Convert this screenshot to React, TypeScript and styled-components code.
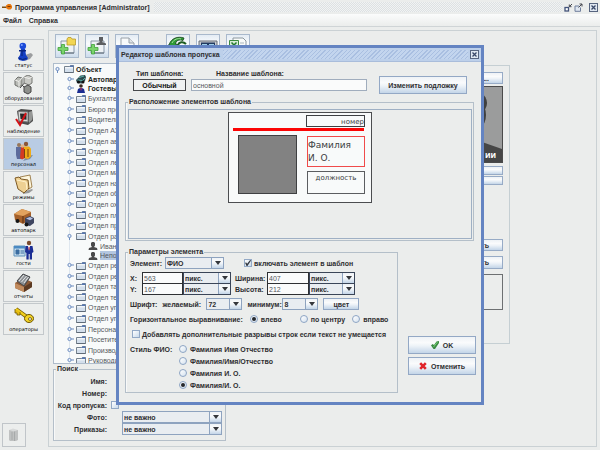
import React from 'react';
import styled, { createGlobalStyle, css } from 'styled-components';

const GlobalStyle = createGlobalStyle`
  *, *::before, *::after { box-sizing: border-box; }
  html, body, #root { height: 100%; }
  body {
    margin: 0;
    background: #ebedec;
    color: #2e2e30;
    font: bold 7px/9px "Liberation Sans", Arial, sans-serif;
    overflow: hidden;
  }
  button, input, select { font: inherit; color: inherit; margin: 0; padding: 0; border-radius: 0; }
  fieldset { margin: 0; min-width: 0; }
`;

const metal = 'linear-gradient(#eef2f6 0%, #fafbfc 35%, #eef3f8 55%, #c3d5e8 100%)';

const Page = styled.div`
  min-height: 100vh;
  display: flex;
  flex-direction: column;
`;

const TitleBar = styled.header`
  height: 14px;
  display: flex;
  align-items: center;
  gap: 3px;
  padding: 0 2px;
`;

const Hatch = styled.div<{ $blue?: boolean }>`
  flex: 1;
  align-self: stretch;
  margin: ${p => (p.$blue ? '2px 4px 2px 3px' : '2px 1px')};
  background: ${p => (p.$blue
    ? 'repeating-linear-gradient(135deg, #a9bfe1 0 1px, #c3d5ee 1px 3px)'
    : 'conic-gradient(#dde1e3 25%, #f1f3f3 0 50%, #dde1e3 0 75%, #f1f3f3 0) 0 0 / 2px 2px')};
`;

const WindowButton = styled.button<{ $gap?: boolean }>`
  width: 9px;
  height: 9px;
  border: 0;
  margin-left: ${p => (p.$gap ? '3px' : '-2px')};
  background: none;
  display: grid;
  place-items: center;
`;

const MenuBar = styled.nav`
  height: 13px;
  display: flex;
  align-items: center;
  gap: 7px;
  padding: 0 3px;
  background: linear-gradient(#fbfcfc, #ebedec);
  border-bottom: 1px solid #cfd4d6;
`;

const MenuItem = styled.button`
  border: 0;
  background: none;
  font-weight: bold;
`;

const Workspace = styled.div`
  flex: 1;
  display: flex;
  gap: 4px;
  padding: 3px 3px 3px 2px;
`;

const Sidebar = styled.nav`
  width: 42px;
  display: flex;
  flex-direction: column;
  gap: 1px;
  padding: 9px 0 0 1px;
`;

const SideButton = styled.button<{ $active?: boolean }>`
  height: 32px;
  display: flex;
  flex-direction: column;
  align-items: center;
  padding: 2px 0 0;
  border: 1px solid #c3c8cb;
  background: ${p => (p.$active ? '#b9cce4' : '#eceeed')};
  font: normal 5px/6px "DejaVu Sans", Verdana, sans-serif;
  color: #000;
  white-space: nowrap;
`;

const TrashButton = styled.button`
  width: 24px;
  height: 24px;
  margin: auto 0 0 -1px;
  display: grid;
  place-items: center;
  border: 1px solid #c0c5c9;
  background: #eceeed;
`;

const Main = styled.main`
  flex: 1;
  display: flex;
  padding: 3px 4px 4px;
  border: 1px solid #cad1d4;
`;

const LeftColumn = styled.section`
  width: 173px;
  display: flex;
  flex-direction: column;
`;

const Toolbar = styled.div`
  display: flex;
  gap: 6px;
  padding-left: 2px;
`;

const ToolButton = styled.button<{ $gap?: boolean }>`
  flex: none;
  width: 24px;
  height: 24px;
  margin-left: ${p => (p.$gap ? '21px' : '0')};
  border: 1px solid #a9b9cc;
  background: linear-gradient(#e4ecf4, #fafcfd 40%, #cddcec);
  display: grid;
  place-items: center;
`;

const TreeBox = styled.div`
  height: 301px;
  margin-top: 5px;
  overflow: hidden;
  border: 1px solid #aebccb;
  background: #f8fafa;
`;

const Tree = styled.ul`
  height: 302px;
  margin: 0;
  padding: 0;
  list-style: none;
  display: flex;
  flex-direction: column;
  background: linear-gradient(#dfe7ef, #dfe7ef) 15px 14px / 1px 100% no-repeat;
`;

const TreeItem = styled.li<{ $level: number; $bold?: boolean; $tight?: boolean }>`
  flex: ${p => (p.$tight ? 9 : 10)} 1 0;
  min-height: 0;
  display: flex;
  align-items: center;
  gap: 2px;
  padding-left: ${p => [1, 13, 34][p.$level]}px;
  font-weight: ${p => (p.$bold ? 'bold' : 'normal')};
  color: ${p => (p.$bold ? '#1d1e20' : '#55585c')};
  white-space: nowrap;
`;

const TreeLabel = styled.span<{ $selected?: boolean }>`
  padding: 0 1px 0 0;
  background: ${p => (p.$selected ? '#b3c6e0' : 'none')};
`;

const Group = styled.fieldset`
  border: 1px solid #b4bfc9;
  box-shadow: inset 1px 0 #f8f9f9;
  padding: 0;
`;

const Legend = styled.legend`
  margin-left: 2px;
  padding: 0 1px;
  height: 8px;
  line-height: 8px;
`;

const SearchGroup = styled(Group)`
  margin-top: 1px;
  padding: 2px 0 5px;
`;

const SearchRow = styled.div`
  height: 12px;
  margin: 0 3px;
  display: grid;
  grid-template-columns: 50px 1fr;
  align-items: center;
  gap: 4px;
  & > label { text-align: right; white-space: nowrap; }
`;

const SearchSelectSlot = styled.div`
  padding-left: 11px;
  display: grid;
`;

const TextField = styled.input`
  height: 12px;
  min-width: 0;
  width: 100%;
  border: 1px solid #a0adbd;
  background: #fafbfb;
  padding: 0 1px;
  font-weight: normal;
  color: #55585c;
`;

const SelectFrame = styled.span<{ $w?: number; $dark?: boolean }>`
  width: ${p => (p.$w ? `${p.$w}px` : 'auto')};
  height: 12px;
  display: flex;
  border: 1px solid ${p => (p.$dark ? '#3a4558' : '#8ea3bf')};
  background: #e9edf1;
  & > select {
    flex: 1;
    min-width: 0;
    border: 0;
    padding: 0 1px;
    background: none;
    appearance: none;
    outline: 0;
  }
`;

const SelectArrow = styled.span`
  width: 12px;
  display: grid;
  place-items: center;
  border-left: 1px solid #8ea3bf;
  background: ${metal};
`;

const Box = styled.input`
  appearance: none;
  width: 8px;
  height: 8px;
  flex: none;
  border: 1px solid #93a9c6;
  background: linear-gradient(135deg, #ffffff, #c9daeb);
  display: grid;
  place-items: center;
  &:checked::before {
    content: '';
    width: 6px;
    height: 6px;
    background: #33383f;
    clip-path: polygon(0 45%, 20% 40%, 35% 62%, 85% 0, 100% 8%, 40% 100%, 25% 100%);
  }
`;

const Radio = styled.input`
  appearance: none;
  width: 8px;
  height: 8px;
  flex: none;
  border: 1px solid #8da5c4;
  border-radius: 50%;
  background: linear-gradient(135deg, #ffffff, #d5e2ef);
  display: grid;
  place-items: center;
  &:checked::before {
    content: '';
    width: 4px;
    height: 4px;
    border-radius: 50%;
    background: #25282c;
  }
`;

const Card = styled.section`
  flex: 0 1 284px;
  align-self: flex-start;
  height: 279px;
  margin-top: 31px;
  padding: 6px 6px 0;
  border: 1px solid #c5cfd3;
  display: flex;
  flex-direction: column;
  align-items: flex-end;
`;

const CardButton = styled.button<{ $h: number; $top: number }>`
  width: 76px;
  height: ${p => p.$h}px;
  margin-top: ${p => p.$top}px;
  padding-right: 13px;
  text-align: right;
  border: 1px solid #97abc6;
  background: ${metal};
`;

const Photo = styled.div`
  margin-top: 2px;
  height: 77px;
  width: 76px;
  border: 1px solid #4b4b4b;
`;

const NoteArea = styled.div`
  width: 76px;
  height: 36px;
  margin-top: 5px;
  border: 1px solid #6d7072;
`;

const Overlay = styled.div`
  position: absolute;
  inset: 0;
  display: grid;
  place-items: center;
`;

const Dialog = styled.div`
  width: 368px;
  border: 3px solid #6484c2;
  background: #ebedec;
`;

const DialogTitle = styled.header`
  height: 14px;
  display: flex;
  align-items: center;
  padding: 0 2px 0 2px;
  background: #bdd0ea;
  border-bottom: 1px solid #a9bddb;
`;

const DialogBody = styled.div`
  padding: 7px 5px 9px 6px;
`;

const HeaderRow = styled.div`
  display: flex;
  align-items: flex-end;
  padding: 0 9px 0 8px;
`;

const HeaderField = styled.div<{ $grow?: boolean }>`
  flex: ${p => (p.$grow ? '1' : '0 0 53px')};
  margin-right: ${p => (p.$grow ? '12px' : '5px')};
  margin-bottom: 3px;
  display: grid;
  gap: 1px;
  & > label { padding-left: ${p => (p.$grow ? '25px' : '3px')}; }
`;

const TypeButton = styled.button`
  height: 12px;
  border: 1px solid #46484b;
  background: #f0f2f2;
  color: #111;
`;

const MetalButton = styled.button<{ $w: number; $h: number }>`
  flex: none;
  width: ${p => p.$w}px;
  height: ${p => p.$h}px;
  display: flex;
  align-items: center;
  justify-content: center;
  gap: 4px;
  border: 1px solid #93a8c5;
  background: ${metal};
  white-space: nowrap;
`;

const PreviewGroup = styled(Group)`
  margin: 4px 2px 7px 0;
  padding: 3px 0 1px;
`;

const PreviewArea = styled.div`
  height: 130px;
  margin: 0 1px 0 2px;
  padding-top: 2px;
  display: flex;
  justify-content: center;
  border: 1px solid #9fb0c4;
`;

const Badge = styled.div`
  position: relative;
  width: 144px;
  height: 91px;
  border: 1px solid #4b4d50;
  background: #f8fafa;
`;

const badgePart = css`
  position: absolute;
  font-family: "DejaVu Sans", Verdana, sans-serif;
  font-weight: normal;
  color: #3c3e42;
`;

const BadgeNumber = styled.div`
  ${badgePart}
  left: 77px; top: 2px; width: 59px; height: 12px;
  border: 1px solid #3d3f42;
  text-align: right;
  line-height: 12px;
`;

const BadgeLine = styled.div`
  ${badgePart}
  left: 4px; top: 15px; width: 131px; height: 3px;
  background: #fb0505;
`;

const BadgePhoto = styled.div`
  ${badgePart}
  left: 9px; top: 22px; width: 59px; height: 59px;
  border: 1px solid #3f4042;
  background: #828282;
`;

const BadgeName = styled.div`
  ${badgePart}
  left: 78px; top: 23px; width: 58px; height: 31px;
  border: 1px solid #f04a4a;
  font-size: 9px;
  line-height: 13px;
  padding-top: 2px;
`;

const BadgeDuty = styled.div`
  ${badgePart}
  left: 78px; top: 58px; width: 58px; height: 23px;
  border: 1px solid #5b5d60;
  text-align: center;
  line-height: 13px;
`;

const LowerRow = styled.div`
  display: flex;
  align-items: stretch;
  gap: 10px;
`;

const ParamGroup = styled(Group)`
  flex: 1;
  padding: 1px 0;
`;

const ParamStack = styled.div`
  margin: 0 4px;
  display: flex;
  flex-direction: column;
  gap: 3px;
`;

const Row = styled.div<{ $gap?: number }>`
  min-height: 12px;
  display: flex;
  align-items: center;
  gap: ${p => p.$gap ?? 5}px;
  white-space: nowrap;
`;

const Check = styled.label<{ $ml?: number; $gap?: number }>`
  display: flex;
  align-items: center;
  gap: ${p => p.$gap ?? 2}px;
  margin-left: ${p => p.$ml ?? 0}px;
  white-space: nowrap;
`;

const SizeGrid = styled.div`
  display: grid;
  grid-template-columns: 12px 41px 48px 36px 42px 46px;
  grid-template-rows: 12px 11px;
  align-items: end;
`;

const SizeLabel = styled.label<{ $inset?: boolean }>`
  align-self: center;
  padding-left: ${p => (p.$inset ? 4 : 0)}px;
`;

const SizeField = styled(TextField)`
  border: 1px solid #2e3033;
`;

const StyleRow = styled.div`
  display: grid;
  grid-template-columns: 49px 1fr;
  align-items: start;
`;

const RadioStack = styled.div`
  display: grid;
  grid-auto-rows: 12px;
`;

const FontLabel = styled.label<{ $w: number }>`
  width: ${p => p.$w}px;
`;

const Actions = styled.div`
  display: flex;
  flex-direction: column;
  justify-content: flex-end;
  gap: 3px;
  padding-bottom: 18px;
`;

/* ---------- icons ---------- */

const CloseGlyph = () => (
  <svg width="9" height="9" viewBox="0 0 9 9" aria-hidden="true">
    <rect x=".5" y=".5" width="8" height="8" fill="#dfe7f1" stroke="#56647f" />
    <path d="M2.500 2.500l4 4M6.500 2.500l-4 4" stroke="#384768" strokeWidth="1.300" />
  </svg>
);

const MinGlyph = () => (
  <svg width="9" height="9" viewBox="0 0 9 9" aria-hidden="true">
    <rect x="1" y="4.500" width="3.500" height="3.500" fill="#fff" stroke="#44547a" strokeWidth="1.300" />
    <path d="M8 1L5.500 3.500M5.300 1.500v2.200h2.200" stroke="#44474f" fill="none" />
  </svg>
);

const MaxGlyph = () => (
  <svg width="9" height="9" viewBox="0 0 9 9" aria-hidden="true">
    <path d="M5 3H1v5.300h5.500V4.500" fill="#dfe6f0" stroke="#6f7e9c" />
    <path d="M4.500 4.500L8 1M5.500 1h2.500v2.500" stroke="#44474f" fill="none" />
  </svg>
);

const AppIcon = () => (
  <svg width="10" height="8" viewBox="0 0 10 8" aria-hidden="true">
    <path d="M0 3.500h5v1.500H0z" fill="#7b4c10" />
    <path d="M4 2.500L6 1h2.500L10 3v2L8.500 6.500H6L4 5z" fill="#e8780e" />
    <path d="M5.500 3.500h3" stroke="#7d3a05" />
  </svg>
);

const Arrow = () => (
  <svg width="6" height="4" viewBox="0 0 6 4" aria-hidden="true">
    <path d="M0 0h6L3 4z" fill="#34373c" />
  </svg>
);

const Handle = ({ open }: { open?: boolean }) => (
  <svg width="7" height="7" viewBox="0 0 7 7" aria-hidden="true">
    <circle cx="2.500" cy="3" r="1.600" fill="#eef3fa" stroke="#6d8dc0" />
    <path d={open ? 'M2.500 4.500V7' : 'M4 3h3'} stroke="#6d8dc0" />
  </svg>
);

const FolderIcon = () => (
  <svg width="10" height="8" viewBox="0 0 10 8" aria-hidden="true">
    <path d="M.5 1.500h5L6.500 .5h3v7h-9z" fill="#d3dfec" stroke="#76838f" />
    <path d="M6 .5h3.500v1.500H5.500z" fill="#5577b3" />
    <path d="M1 2.800h8" stroke="#fff" />
    <path d="M.5 7.500h9" stroke="#5f6b78" />
  </svg>
);

const CarIcon = () => (
  <svg width="10" height="9" viewBox="0 0 10 9" aria-hidden="true">
    <path d="M0 5l3-3 1.500-1.500L9 0l1 2-1 4-3 2.500L1 8z" fill="#2c4a50" />
    <path d="M3 2.500l5-1.500M1.500 5l5 .5L9 3" stroke="#5bb0a8" fill="none" />
    <circle cx="2.500" cy="7" r="1.500" fill="#111" /><circle cx="7" cy="7" r="1.500" fill="#111" />
  </svg>
);

const GuestIcon = () => (
  <svg width="10" height="9" viewBox="0 0 10 9" aria-hidden="true">
    <circle cx="5" cy="2" r="1.800" fill="#3b2a22" />
    <path d="M1 9l1-4 2-1h2l2 1 1 4z" fill="#1a2d92" />
    <path d="M4.300 4.200h1.500L5 7z" fill="#e34" />
  </svg>
);

const PersonIcon = () => (
  <svg width="10" height="8" viewBox="0 0 10 8" aria-hidden="true">
    <path d="M3 1l1-1h2l1 1v2.500L6 5l3 1 .5 2h-9L1 6l3-1-1-1.500z" fill="#4a4a4a" />
  </svg>
);

const SideSvg = ({ children }: { children: React.ReactNode }) => (
  <svg width="22" height="20" viewBox="0 0 22 20" aria-hidden="true">{children}</svg>
);

const StatusIcon = () => (
  <SideSvg>
    <path d="M12 13l6-2 2 2-3 4-6 2z" fill="#9b9d9f" />
    <path d="M8 7h4l1 6 2 3-1 2-4 1-4-1-1-2 2-3z" fill="#1540c4" />
    <circle cx="9.800" cy="4" r="3.300" fill="#1a4ad8" />
    <path d="M6 8h7v1.500H6z" fill="#0a2580" />
    <path d="M9 9v5M5.500 16l4 1.500 4-1" stroke="#0a2372" fill="none" />
    <circle cx="8.800" cy="3" r="1" fill="#7fa2ff" />
  </SideSvg>
);

const EquipmentIcon = () => (
  <SideSvg>
    <path d="M7 13L14 5M6 7l9 9" stroke="#444" />
    <path d="M2 5l3-3 4 1v7l-3 2-4-2z" fill="#b9bbb6" stroke="#6d6f6b" />
    <path d="M11 2l4-2 4 2v6l-3 2-5-2z" fill="#c9cac6" stroke="#757672" />
    <path d="M11 12l4-2 3 2v5l-3 2-4-2z" fill="#8e908c" stroke="#444" />
    <path d="M2 5l4 1.500L9 3M6 6.500V12M11 2l5 1.500L19 2" stroke="#efefec" fill="none" />
  </SideSvg>
);

const WatchIcon = () => (
  <SideSvg>
    <path d="M4 3l4-2 11 1 1 11-5 4-9-2z" fill="#4c4c4c" />
    <path d="M5 3.500l10 .5v10L6 13z" fill="#d9dad8" stroke="#777" />
    <path d="M7 5.500l6.500.3v6L7.500 11z" fill="#2a2a2a" />
    <path d="M16 4l3-1v9l-3 3z" fill="#969896" />
    <path d="M3 11l4 6 6-12" stroke="#d31217" strokeWidth="2" fill="none" />
  </SideSvg>
);

const StaffIcon = () => (
  <SideSvg>
    <path d="M14 15l6-1-3 4-7 2z" fill="#7d8ca0" />
    <circle cx="6" cy="4" r="2" fill="#97765a" /><circle cx="13" cy="3" r="2.200" fill="#8b5637" />
    <path d="M3 6h5l1 8-1 4H4l-1-4z" fill="#5c6b9c" />
    <path d="M8 6h4v11l-3 1.500L7 17z" fill="#d43b22" />
    <path d="M11 5.500h5l2 2v8l-3 2.500-4-1z" fill="#f0ab17" />
    <circle cx="9.500" cy="5" r="1.800" fill="#e0b48d" />
    <path d="M11.500 8v9M15 8v8" stroke="#7b3f13" />
  </SideSvg>
);

const ModesIcon = () => (
  <SideSvg>
    <path d="M10 18l9-3 1 1-4 3-6 1z" fill="#999" />
    <path d="M7 3l10-2 2 12-8 5z" fill="#fdf6dc" stroke="#8c672c" strokeWidth=".8" />
    <path d="M2 4l4-1 2 2 7 1 1 8-5 5-6-4z" fill="#eed092" stroke="#7d5a26" />
    <path d="M4 6l9 2 1 8" stroke="#fff2cb" fill="none" />
  </SideSvg>
);

const TruckIcon = () => (
  <SideSvg>
    <path d="M1 7l8-5 9 3v7l-8 5-8-4z" fill="#a4602a" />
    <path d="M1 7l8-5 9 3-8 4z" fill="#e2a35f" />
    <path d="M10 9v7" stroke="#5a2e10" />
    <path d="M12 11l5-2 4 2v5l-4 3-5-1z" fill="#3f4660" />
    <path d="M13 11.500l4-1.500 3 1.500-3 1.800z" fill="#b4c1e2" />
    <circle cx="4.500" cy="14" r="2" fill="#151515" /><circle cx="13.500" cy="17.500" r="2" fill="#151515" />
  </SideSvg>
);

const GuestsIcon = () => (
  <SideSvg>
    <path d="M1 6h11v10H1z" fill="#c6dcec" stroke="#5c90bb" />
    <path d="M1 6h11v2.500H1z" fill="#4b8ac2" />
    <path d="M3 10h3v4H3zM7.500 11H11M7.500 13H11" fill="#3a6da0" stroke="#3a6da0" />
    <circle cx="16" cy="3" r="2.200" fill="#7a4a2c" />
    <path d="M12.500 6h7l1 6-1.500 1v6.500h-2.300V14h-1v5.500h-2.300V13L12 12z" fill="#1c2e94" />
    <path d="M15 6h2l-1 5z" fill="#fff" /><path d="M15.700 7h.8v3h-.8z" fill="#d22" />
  </SideSvg>
);

const ReportsIcon = () => (
  <SideSvg>
    <path d="M2 10l8-5 9 4v5l-8 5-9-4z" fill="#8b5a38" />
    <path d="M2 10l9 4v5l-9-4z" fill="#c18b5e" />
    <path d="M4 8l6-7 7 3-6 9z" fill="#8d9195" stroke="#45484b" />
    <path d="M6 8l5-6M8.500 9l5-6M11 10l4.500-6" stroke="#e4e6e7" />
    <path d="M11 14l8-5v5l-8 5z" fill="#5b3922" />
  </SideSvg>
);

const KeyIcon = () => (
  <SideSvg>
    <path d="M3 3l11 8" stroke="#6d5500" strokeWidth="4" />
    <path d="M3 3l11 8" stroke="#f2cf1d" strokeWidth="2.400" />
    <path d="M2 3v4h2v2h3V6" fill="#e6bd12" stroke="#6d5500" strokeWidth=".8" />
    <ellipse cx="16" cy="12.500" rx="4.500" ry="4" fill="#f4d424" stroke="#6d5500" />
    <ellipse cx="17" cy="13" rx="1.600" ry="1.400" fill="#eceeed" stroke="#6d5500" strokeWidth=".8" />
  </SideSvg>
);

const ToolSvg = ({ children }: { children: React.ReactNode }) => (
  <svg width="20" height="20" viewBox="0 0 20 20" aria-hidden="true">{children}</svg>
);

const Plus = () => (
  <path d="M4.500 8.500h3v3h3.500v3H7.500V18h-3v-3.500H1v-3h3.500z" fill="#7ad36c" stroke="#3fa23a" strokeWidth=".8" />
);

const AddFolderIcon = () => (
  <ToolSvg>
    <path d="M4 5h13v12H4z" fill="#eef2f5" stroke="#8796a6" />
    <path d="M10 3l1-1.500h3L15 3h3.500v6H10z" fill="#f2d654" stroke="#b79a2a" strokeWidth=".8" />
    <path d="M4.500 17h12.500" stroke="#5d6a78" /><Plus />
  </ToolSvg>
);

const AddPersonIcon = () => (
  <ToolSvg>
    <path d="M4 5h13v12H4z" fill="#eef2f5" stroke="#8796a6" />
    <path d="M12 1h4v3.500L15 6l4 1.500V9H9.500V7.500L13 6l-1-1.500z" fill="#5d5f62" />
    <path d="M4.500 17h12.500" stroke="#5d6a78" /><Plus />
  </ToolSvg>
);

const PageIcon = () => (
  <ToolSvg>
    <path d="M4 2h8l5 5v11H4z" fill="#f8fafb" stroke="#98a0a8" />
    <path d="M12 2v5h5" fill="#dfe4e8" stroke="#98a0a8" />
  </ToolSvg>
);

const RefreshIcon = () => (
  <ToolSvg>
    <path d="M1 9C3 2 10 0 16 2l-1 2.500C11 3 8 4.500 7.500 8L10 8.500 5 13 .5 9z" fill="#2f9a36" stroke="#123e16" strokeWidth=".8" />
    <path d="M4 7c2-4 6-5 9-4" stroke="#a6e79c" fill="none" />
    <path d="M10 9c1-3 5-4 8-1" stroke="#1d5c22" strokeWidth="2" fill="none" />
  </ToolSvg>
);

const MonitorIcon = () => (
  <ToolSvg>
    <path d="M1 5h18v12H1z" fill="#c9ccd0" stroke="#666c76" />
    <path d="M3 6.500h14v7H3z" fill="#20395f" />
    <path d="M4 8.500h5M11 8.500h5M4 10.500h3" stroke="#9fd0e8" />
  </ToolSvg>
);

const SheetIcon = () => (
  <ToolSvg>
    <path d="M5 2h10l3 3v13H5z" fill="#f8faf9" stroke="#8b979f" />
    <path d="M1.500 4.500h9v9h-9z" fill="#d6edd6" stroke="#3b8a3e" />
    <path d="M3.500 6.500l5 5M8.500 6.500l-5 5" stroke="#22772a" strokeWidth="1.500" />
    <path d="M12 7h4M12 9.500h4M12 12h4" stroke="#aab6bd" />
  </ToolSvg>
);

const TrashIcon = () => (
  <svg width="12" height="14" viewBox="0 0 12 14" aria-hidden="true">
    <path d="M1 2h9v10l-2 1H2l-1-1z" fill="#bfc1c1" />
    <path d="M1 2l4-1.500L10 2 6 3.500z" fill="#d8dada" />
    <path d="M6.500 3.500V13M4 4v8" stroke="#a7aaaa" />
  </svg>
);

const Portrait = () => (
  <svg width="74" height="75" viewBox="0 0 74 75" aria-hidden="true">
    <rect width="74" height="75" fill="#9b9c9c" />
    <ellipse cx="38" cy="16" rx="21" ry="15" fill="#3f3f3f" />
    <ellipse cx="38" cy="28" rx="20" ry="20" fill="#3f3f3f" />
    <path d="M0 75V62l20-7h34l20 7v13z" fill="#464646" />
    <text x="68" y="71" textAnchor="end" fill="#fff" fontSize="9">ии</text>
  </svg>
);

const OkIcon = () => (
  <svg width="8" height="8" viewBox="0 0 8 8" aria-hidden="true">
    <path d="M0 4.500L1.500 3l1.500 1L5.500 .5 8 0v2L4 8H2.500z" fill="#3c8a45" />
    <path d="M2.500 6L6.500 1" stroke="#73cf70" />
  </svg>
);

const CancelIcon = () => (
  <svg width="8" height="8" viewBox="0 0 8 8" aria-hidden="true">
    <path d="M1.200 1.200l5.600 5.600M6.800 1.200L1.200 6.800" stroke="#e0242a" strokeWidth="2.600" />
  </svg>
);

/* ---------- data ---------- */

const sections: [string, () => React.ReactElement][] = [
  ['статус', StatusIcon],
  ['оборудование', EquipmentIcon],
  ['наблюдение', WatchIcon],
  ['персонал', StaffIcon],
  ['режимы', ModesIcon],
  ['автопарк', TruckIcon],
  ['гости', GuestsIcon],
  ['отчеты', ReportsIcon],
  ['операторы', KeyIcon],
];

const tools: [string, () => React.ReactElement][] = [
  ['add-folder', AddFolderIcon],
  ['add-person', AddPersonIcon],
  ['page', PageIcon],
  ['refresh', RefreshIcon],
  ['monitor', MonitorIcon],
  ['sheet', SheetIcon],
];

type Kind = 'folder' | 'car' | 'guest' | 'person';
interface Node { text: string; kind: Kind; level: number; bold?: boolean; open?: boolean; selected?: boolean }

const folders = (names: string[]): Node[] => names.map(text => ({ text, kind: 'folder', level: 1 }));

const nodes: Node[] = [
  { text: 'Объект', kind: 'folder', level: 0, bold: true, open: true },
  { text: 'Автопарк', kind: 'car', level: 1, bold: true },
  { text: 'Гостевые', kind: 'guest', level: 1, bold: true },
  ...folders(['Бухгалтер', 'Бюро про', 'Водители', 'Отдел АХ', 'Отдел ав', 'Отдел ка', 'Отдел ле',
    'Отдел ма', 'Отдел на', 'Отдел об', 'Отдел ох', 'Отдел пл', 'Отдел пр']),
  { text: 'Отдел ра', kind: 'folder', level: 1, open: true },
  { text: 'Иван', kind: 'person', level: 2 },
  { text: 'Непо', kind: 'person', level: 2, selected: true },
  ...folders(['Отдел ре', 'Отдел ре', 'Отдел та', 'Отдел те', 'Отдел уп', 'Отдел уп',
    'Персонал', 'Посетите', 'Производ', 'Руководи']),
];

const nodeIcons: Record<Kind, () => React.ReactElement> = {
  folder: FolderIcon, car: CarIcon, guest: GuestIcon, person: PersonIcon,
};

const Select = ({ id, value, width, dark, label }: {
  id: string; value: string; width?: number; dark?: boolean; label?: string;
}) => (
  <SelectFrame $w={width} $dark={dark}>
    <select id={id} defaultValue={value} aria-label={label}><option>{value}</option></select>
    <SelectArrow><Arrow /></SelectArrow>
  </SelectFrame>
);

const SizeRow = ({ items }: { items: [string, string, string][] }) => (
  <>
    {items.map(([id, label, value], i) => (
      <React.Fragment key={id}>
        <SizeLabel htmlFor={id} $inset={i > 0}>{label}</SizeLabel>
        <SizeField id={id} defaultValue={value} />
        <Select id={`${id}-unit`} value="пикс." dark label={`${label} пикс.`} />
      </React.Fragment>
    ))}
  </>
);

const TemplateDialog = () => (
  <Overlay>
    <Dialog role="dialog" aria-labelledby="dialog-title">
      <DialogTitle>
        <span id="dialog-title">Редактор шаблона пропуска</span>
        <Hatch $blue />
        <WindowButton aria-label="Закрыть"><CloseGlyph /></WindowButton>
      </DialogTitle>
      <DialogBody>
        <HeaderRow>
          <HeaderField>
            <label htmlFor="type">Тип шаблона:</label>
            <TypeButton id="type">Обычный</TypeButton>
          </HeaderField>
          <HeaderField $grow>
            <label htmlFor="name">Название шаблона:</label>
            <TextField id="name" defaultValue="основной" />
          </HeaderField>
          <MetalButton $w={88} $h={18}>Изменить подложку</MetalButton>
        </HeaderRow>
        <PreviewGroup>
          <Legend>Расположение элементов шаблона</Legend>
          <PreviewArea>
            <Badge>
              <BadgeNumber>номер</BadgeNumber>
              <BadgeLine />
              <BadgePhoto />
              <BadgeName>Фамилия<br />И. О.</BadgeName>
              <BadgeDuty>должность</BadgeDuty>
            </Badge>
          </PreviewArea>
        </PreviewGroup>
        <LowerRow>
          <ParamGroup>
            <Legend>Параметры элемента</Legend>
            <ParamStack>
              <Row $gap={3}>
                <label htmlFor="element">Элемент:</label>
                <Select id="element" value="ФИО" width={59} />
                <Check $ml={17}><Box type="checkbox" defaultChecked />включать элемент в шаблон</Check>
              </Row>
              <SizeGrid>
                <SizeRow items={[['x', 'X:', '563'], ['w', 'Ширина:', '407']]} />
                <SizeRow items={[['y', 'Y:', '167'], ['h', 'Высота:', '212']]} />
              </SizeGrid>
              <Row>
                <span>Шрифт:</span>
                <FontLabel $w={39} htmlFor="wish">желаемый:</FontLabel>
                <Select id="wish" value="72" width={36} />
                <FontLabel $w={30} htmlFor="minimum">минимум:</FontLabel>
                <Select id="minimum" value="8" width={36} />
                <MetalButton $w={36} $h={12}>цвет</MetalButton>
              </Row>
              <Row $gap={7}>
                <span>Горизонтальное выравнивание:</span>
                <Check $gap={3}><Radio type="radio" name="align" defaultChecked />влево</Check>
                <Check $gap={3} $ml={11}><Radio type="radio" name="align" />по центру</Check>
                <Check $gap={3}><Radio type="radio" name="align" />вправо</Check>
              </Row>
              <Row>
                <Check $ml={2}><Box type="checkbox" />Добавлять дополнительные разрывы строк если текст не умещается</Check>
              </Row>
              <StyleRow>
                <Row>Стиль ФИО:</Row>
                <RadioStack>
                  {['Фамилия Имя Отчество', 'Фамилия/Имя/Отчество', 'Фамилия И. О.', 'Фамилия/И. О.'].map((t, i) => (
                    <Check key={t} $gap={3}><Radio type="radio" name="fio" defaultChecked={i === 3} />{t}</Check>
                  ))}
                </RadioStack>
              </StyleRow>
            </ParamStack>
          </ParamGroup>
          <Actions>
            <MetalButton $w={68} $h={18}><OkIcon />OK</MetalButton>
            <MetalButton $w={68} $h={18}><CancelIcon />Отменить</MetalButton>
          </Actions>
        </LowerRow>
      </DialogBody>
    </Dialog>
  </Overlay>
);

export default function App() {
  return (
    <Page>
      <GlobalStyle />
      <TitleBar>
        <AppIcon />
        <span>Программа управления [Administrator]</span>
        <Hatch />
        <WindowButton aria-label="Свернуть"><MinGlyph /></WindowButton>
        <WindowButton aria-label="Развернуть"><MaxGlyph /></WindowButton>
        <WindowButton $gap aria-label="Закрыть"><CloseGlyph /></WindowButton>
      </TitleBar>
      <MenuBar>
        <MenuItem>Файл</MenuItem>
        <MenuItem>Справка</MenuItem>
      </MenuBar>
      <Workspace>
        <Sidebar>
          {sections.map(([label, Icon]) => (
            <SideButton key={label} $active={label === 'персонал'}><Icon />{label}</SideButton>
          ))}
          <TrashButton aria-label="Корзина"><TrashIcon /></TrashButton>
        </Sidebar>
        <Main>
          <LeftColumn>
            <Toolbar>
              {tools.map(([name, Icon], i) => (
                <ToolButton key={name} aria-label={name} $gap={i === 3}><Icon /></ToolButton>
              ))}
            </Toolbar>
            <TreeBox>
              <Tree>
                {nodes.map((n, i) => {
                  const Icon = nodeIcons[n.kind];
                  return (
                    <TreeItem key={i} $level={n.level} $bold={n.bold} $tight={n.kind !== 'folder'}>
                      {n.kind !== 'person' && <Handle open={n.open} />}
                      <Icon />
                      <TreeLabel $selected={n.selected}>{n.text}</TreeLabel>
                    </TreeItem>
                  );
                })}
              </Tree>
            </TreeBox>
            <SearchGroup>
              <Legend>Поиск</Legend>
              <SearchRow><label htmlFor="s-name">Имя:</label><SearchSelectSlot><TextField id="s-name" /></SearchSelectSlot></SearchRow>
              <SearchRow><label htmlFor="s-num">Номер:</label><SearchSelectSlot><TextField id="s-num" /></SearchSelectSlot></SearchRow>
              <SearchRow><label htmlFor="s-code">Код пропуска:</label><Box type="checkbox" id="s-code" /></SearchRow>
              <SearchRow><label htmlFor="s-photo">Фото:</label><SearchSelectSlot><Select id="s-photo" value="не важно" /></SearchSelectSlot></SearchRow>
              <SearchRow><label htmlFor="s-order">Приказы:</label><SearchSelectSlot><Select id="s-order" value="не важно" /></SearchSelectSlot></SearchRow>
            </SearchGroup>
          </LeftColumn>
          <Card>
            <CardButton $h={12} $top={0}>...</CardButton>
            <Photo><Portrait /></Photo>
            <CardButton $h={9} $top={3} aria-label="Загрузить" />
            <CardButton $h={9} $top={1} aria-label="Очистить" />
            <CardButton $h={12} $top={54}>ть</CardButton>
            <CardButton $h={13} $top={5}>ть</CardButton>
            <NoteArea />
          </Card>
        </Main>
      </Workspace>
      <TemplateDialog />
    </Page>
  );
}
